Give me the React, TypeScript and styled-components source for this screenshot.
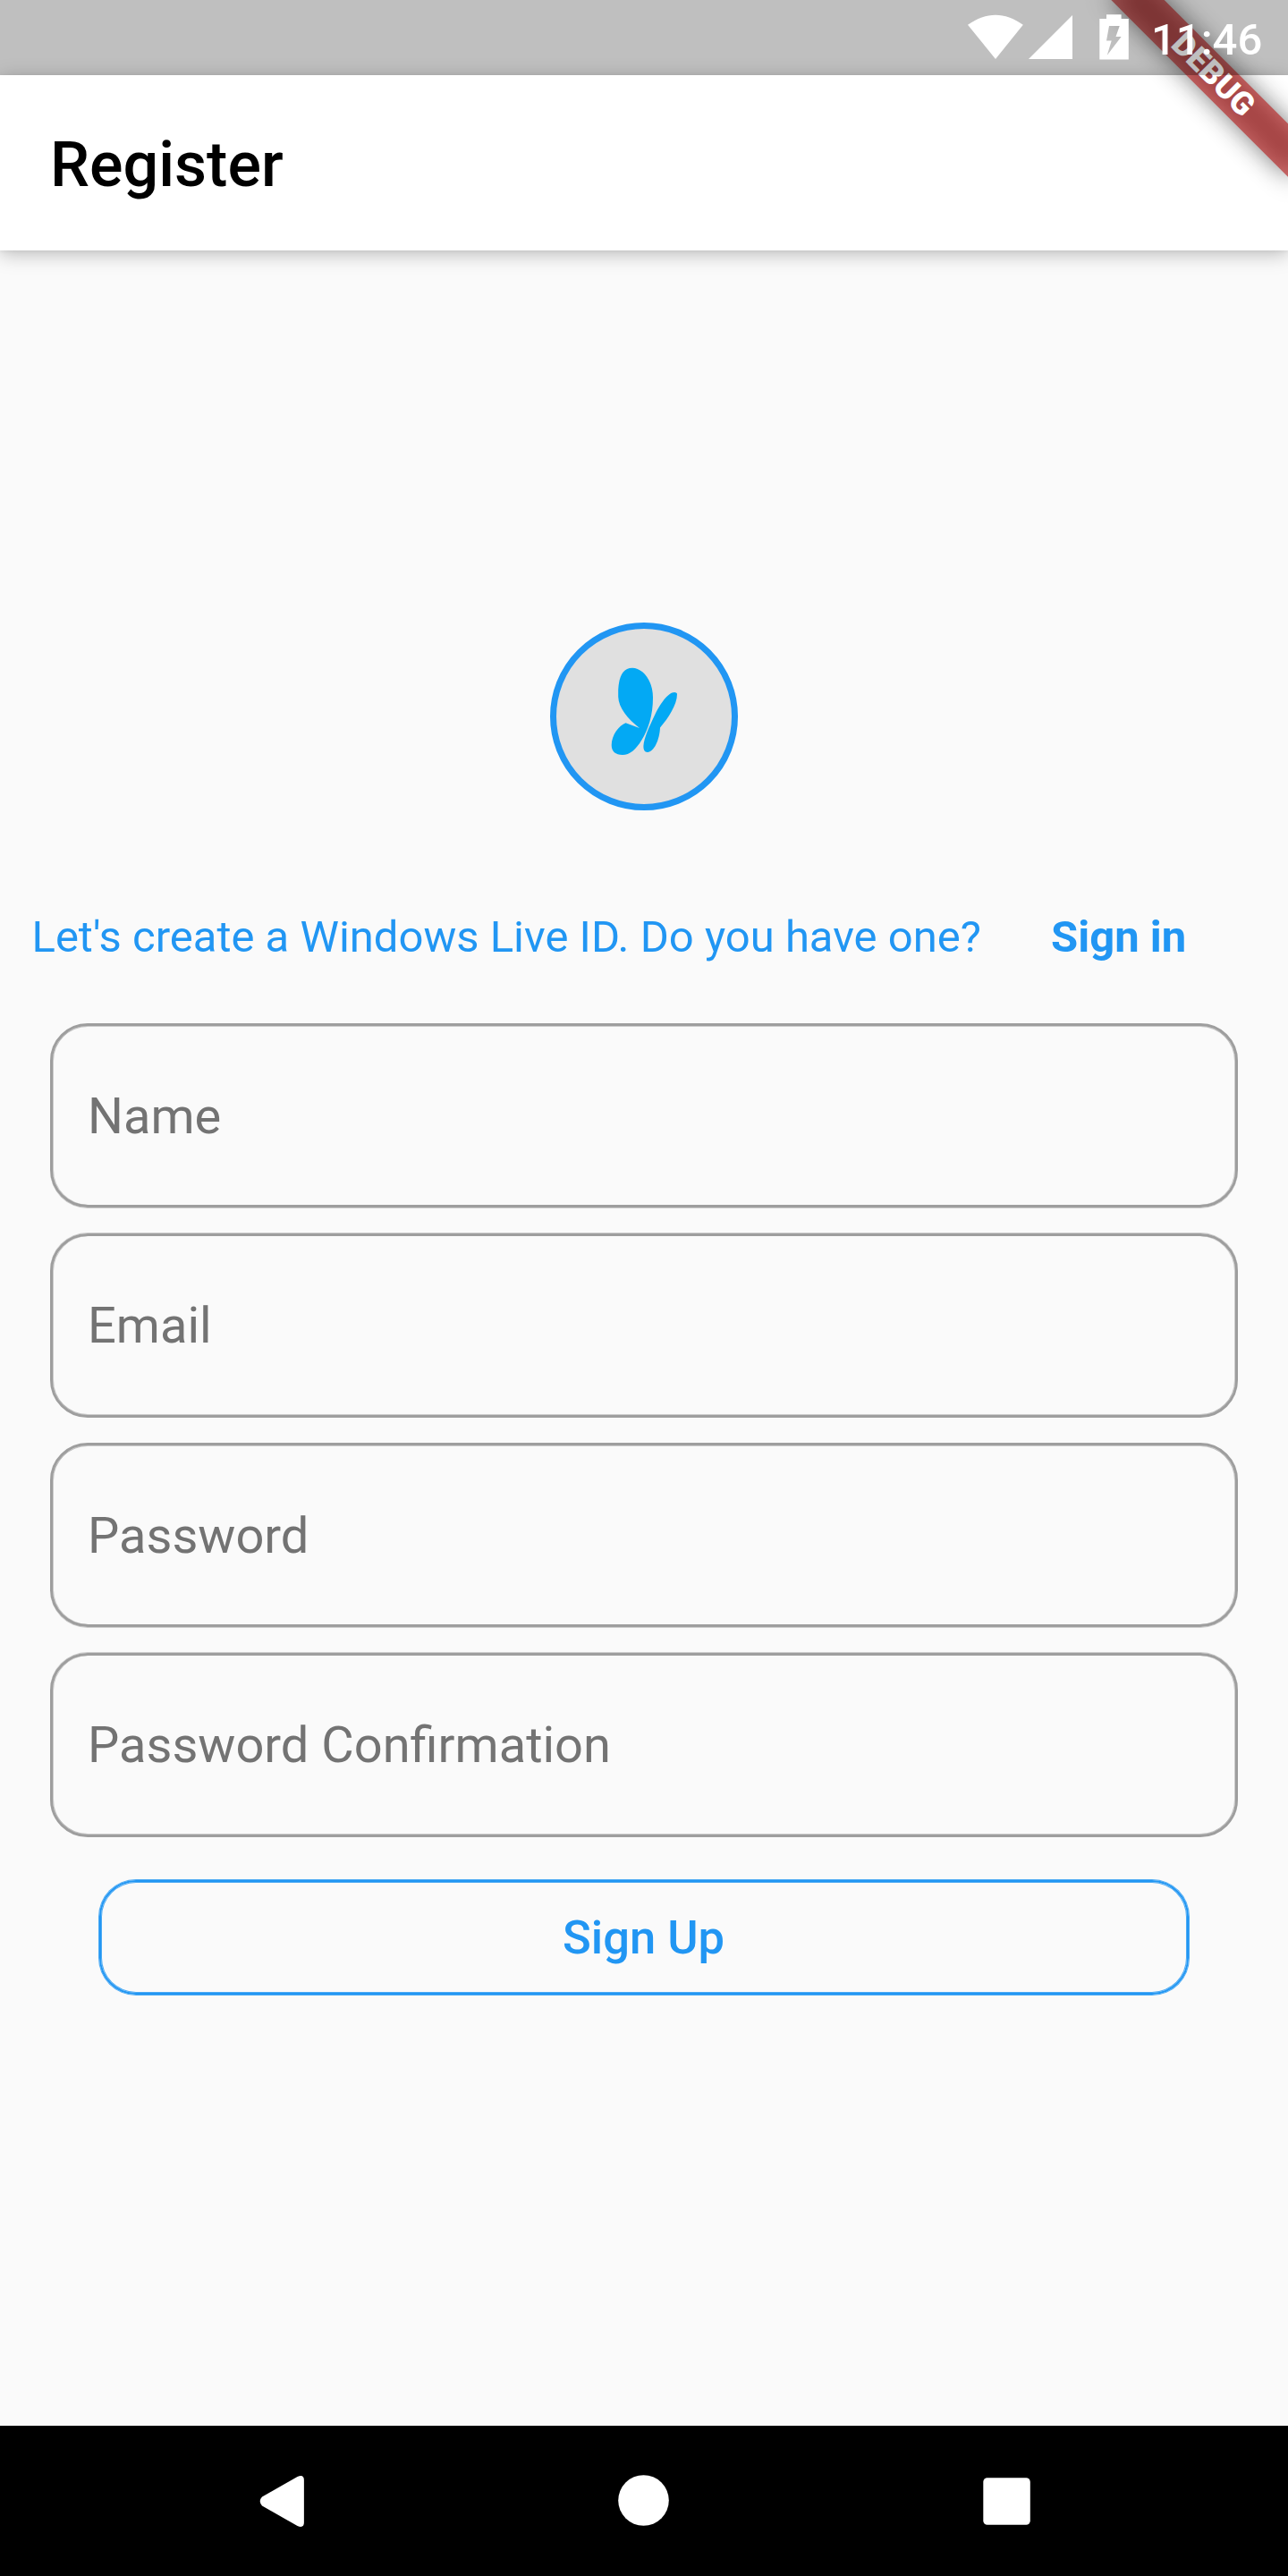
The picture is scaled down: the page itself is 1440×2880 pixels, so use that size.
import React from "react";
import styled, { createGlobalStyle } from "styled-components";

const BLUE = "#2196f3";

const GlobalStyle = createGlobalStyle`
  *, *::before, *::after { box-sizing: border-box; }
  body { margin: 0; background: #fff; }
`;

const Screen = styled.div`
  position: relative;
  display: flex;
  flex-direction: column;
  width: 1440px;
  height: 2880px;
  overflow: hidden;
  background: #fff;
  font-family: Roboto, "Liberation Sans", sans-serif;
`;

const StatusBar = styled.div`
  position: relative;
  z-index: 3;
  flex: none;
  display: flex;
  justify-content: flex-end;
  height: 84px;
  padding-right: 31px;
  background: rgba(0, 0, 0, 0.25);
`;

const StatusIcons = styled.svg`
  display: block;
  width: 190px;
  height: 84px;
  margin-right: 13px;
`;

const Clock = styled.time`
  width: 122px;
  padding-top: 16px;
  color: #fff;
  font-size: 49px;
  font-weight: 500;
  line-height: 57px;
  white-space: nowrap;
`;

const AppBar = styled.header`
  position: relative;
  z-index: 1;
  flex: none;
  display: flex;
  align-items: center;
  height: 196px;
  padding: 4px 56px 0;
  background: #fff;
  box-shadow: 0 4px 20px rgba(0, 0, 0, 0.26), 0 1px 4px rgba(0, 0, 0, 0.05);
`;

const Title = styled.h1`
  margin: 0;
  color: #000;
  font-size: 70px;
  font-weight: 500;
  line-height: 82px;
`;

const Banner = styled.div`
  position: absolute;
  z-index: 2;
  top: 63px;
  left: 1216px;
  width: 280px;
  height: 42px;
  transform: rotate(45deg);
`;

const BannerShadow = styled.div`
  width: 280px;
  height: 42px;
  background: rgba(0, 0, 0, 0.5);
  filter: blur(13.9px);
`;

const BannerRibbon = styled.div`
  position: absolute;
  inset: 0;
  background: rgba(183, 28, 28, 0.627);
  color: #fff;
  font-size: 35.7px;
  font-weight: 900;
  line-height: 40px;
  text-align: center;
`;

const Body = styled.main`
  flex: 1;
  display: flex;
  flex-direction: column;
  padding-top: 416px;
  background: #fafafa;
`;

const Avatar = styled.div`
  flex: none;
  display: flex;
  align-self: center;
  width: 210px;
  height: 210px;
  border: 7px solid ${BLUE};
  border-radius: 50%;
  background: #e0e0e0;
`;

const Butterfly = styled.svg`
  display: block;
  width: 196px;
  height: 196px;
`;

const Prompt = styled.div`
  display: flex;
  align-items: center;
  height: 57px;
  margin: 113px 0 68px;
  padding-left: 35.5px;
  color: ${BLUE};
  font-size: 49px;
  line-height: 57px;
  white-space: nowrap;
`;

const PromptText = styled.span`
  width: 1139.5px;
`;

const SignInLink = styled.a`
  color: ${BLUE};
  font-weight: 700;
  text-decoration: none;
`;

const Form = styled.form`
  display: flex;
  flex-direction: column;
  padding: 0 56px;
`;

/* A 3.5px outline: 3px of border and a half-strength hairline beside it,
   which falls above or below the border depending on the row. */
const Field = styled.label<{ $shifted: boolean }>`
  display: flex;
  align-items: center;
  height: 206px;
  margin-bottom: ${(p) => (p.$shifted ? 28 : 29)}px;
  padding: ${(p) => (p.$shifted ? 0 : 2)}px 39px 0;
  border: 3px solid #9e9e9e;
  border-radius: 42px;
  box-shadow:
    inset 1px 0 rgba(158, 158, 158, 0.5),
    inset -1px 0 rgba(158, 158, 158, 0.5),
    inset 0 ${(p) => (p.$shifted ? -1 : 1)}px rgba(158, 158, 158, 0.5),
    0 ${(p) => (p.$shifted ? -1 : 1)}px rgba(158, 158, 158, 0.5);
`;

const Input = styled.input`
  width: 100%;
  height: 66px;
  padding: 0;
  border: 0;
  outline: 0;
  background: transparent;
  font: 400 56px/66px Roboto, "Liberation Sans", sans-serif;

  &::placeholder {
    color: #737373;
    opacity: 1;
  }
`;

const SignUpButton = styled.button`
  height: 128px;
  margin: 20px 55px 0;
  padding: 0 1px 0 0;
  border: 2px solid ${BLUE};
  border-radius: 41px;
  background: transparent;
  box-shadow:
    inset 0 0 0 1px rgba(33, 150, 243, 0.8),
    0 0 0 1px rgba(33, 150, 243, 0.8);
  color: ${BLUE};
  font: 500 52.5px/62px Roboto, "Liberation Sans", sans-serif;
`;

const NavBar = styled.nav`
  flex: none;
  display: flex;
  justify-content: space-between;
  height: 168px;
  padding: 0 266px;
  background: #000;
`;

const NavIcon = styled.svg`
  display: block;
  width: 98px;
  height: 168px;
  fill: #fff;
`;

const fields = [
  { name: "name", type: "text", label: "Name" },
  { name: "email", type: "email", label: "Email" },
  { name: "password", type: "password", label: "Password" },
  { name: "confirmation", type: "password", label: "Password Confirmation" },
];

export default function App() {
  return (
    <Screen>
      <GlobalStyle />
      <StatusBar>
        <StatusIcons viewBox="1084 0 190 84" overflow="visible" fill="#fff">
          <path d="M1082 27.8C1103 12.9 1123 12.9 1143.8 27.8L1113 66Z" />
          <path d="M1150 66H1199V17Z" />
          <path
            fillRule="evenodd"
            d="M1237 16.2H1253.6V21H1261.8V66.6H1229.3V21H1237ZM1240 29L1237 45.5H1242.7L1237.8 61.8L1253.6 41H1247.5L1251.7 29Z"
          />
        </StatusIcons>
        <Clock>11:46</Clock>
      </StatusBar>

      <Banner>
        <BannerShadow />
        <BannerRibbon>DEBUG</BannerRibbon>
      </Banner>

      <AppBar>
        <Title>Register</Title>
      </AppBar>

      <Body>
        <Avatar>
          <Butterfly viewBox="622 703 196 196" fill="#03a9f4">
            <path d="M715 814C702 804 691.5 791 691.2 779V771C692 757 696 746.7 707 746.7C718 746.7 730 760 730 780C730 800 724.5 816 717.6 827C711 838 704 844 696 844C688 844 683.7 840 683.7 833C683.7 822 692 811 699.5 808.2Z" />
            <path d="M757 776C757 788 747 803 738 813.5C737.5 827 731 841 724 841C720.5 841 719.3 838 719.4 834C720 825 726 812 732 799.5C738 787 747 774 754 774C756 774 757 775 757 776Z" />
          </Butterfly>
        </Avatar>

        <Prompt>
          <PromptText>Let's create a Windows Live ID. Do you have one?</PromptText>
          <SignInLink href="#">Sign in</SignInLink>
        </Prompt>

        <Form>
          {fields.map((f, i) => (
            <Field key={f.name} $shifted={i % 2 === 1}>
              <Input name={f.name} type={f.type} placeholder={f.label} />
            </Field>
          ))}
          <SignUpButton type="button">Sign Up</SignUpButton>
        </Form>
      </Body>

      <NavBar>
        <NavIcon viewBox="266 2712 98 168">
          <path d="M293 2791.6L332.5 2769Q339.9 2766 339.9 2773V2820Q339.9 2827 332.5 2824L293 2801.5Q288.5 2796.5 293 2791.6Z" />
        </NavIcon>
        <NavIcon viewBox="670.5 2712 98 168">
          <circle cx="719" cy="2795.5" r="28.3" />
        </NavIcon>
        <NavIcon viewBox="1076 2712 98 168">
          <rect x="1099.3" y="2770.2" width="52.5" height="52.5" rx="4.5" />
        </NavIcon>
      </NavBar>
    </Screen>
  );
}
